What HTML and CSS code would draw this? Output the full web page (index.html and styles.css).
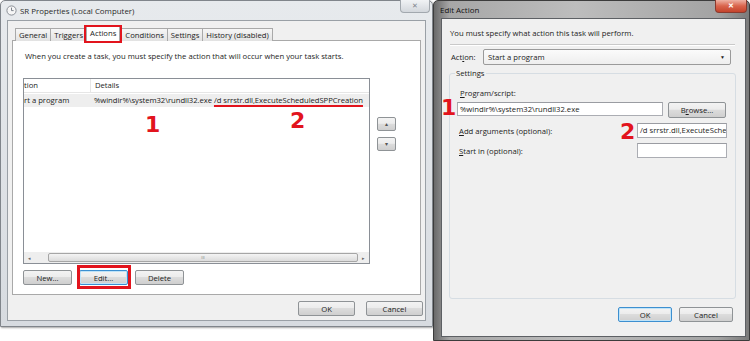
FILE: index.html
```html
<!DOCTYPE html>
<html lang="en">
<head>
  <meta charset="UTF-8">
  <title>SR Properties - Edit Action</title>
  <link rel="stylesheet" href="styles.css">
</head>
<body>
  <div class="win win-props">
    <div class="titlebar">
      <svg class="title-icon" width="11" height="11" viewBox="0 0 11 11">
        <circle cx="5.5" cy="5.5" r="4.6" fill="#f6f6f6" stroke="#8a8f96"/>
        <path d="M5.5 2.6v3h2.1" fill="none" stroke="#707680" stroke-width="0.9"/>
      </svg>
      <span class="title-text">SR Properties (Local Computer)</span>
      <div class="close-btn">&#x2715;</div>
    </div>
    <div class="client">
      <div class="tabs">
        <div class="tab">General</div>
        <div class="tab">Triggers</div>
        <div class="tab active marked-box">Actions</div>
        <div class="tab">Conditions</div>
        <div class="tab">Settings</div>
        <div class="tab">History (disabled)</div>
      </div>
      <div class="pane">
        <p class="intro">When you create a task, you must specify the action that will occur when your task starts.</p>
        <div class="list-row">
          <div class="listview">
            <div class="lv-body">
              <div class="lv-head">
                <div class="col-action">tion</div>
                <div class="col-details">Details</div>
              </div>
              <div class="lv-item">
                <div class="col-action">rt a program</div>
                <div class="col-details">%windir%\system32\rundll32.exe <span class="marked-line">/d srrstr.dll,ExecuteScheduledSPPCreation</span></div>
              </div>
            </div>
            <div class="hscroll">
              <span class="arrow">&#9666;</span>
              <div class="thumb">III</div>
              <span class="arrow">&#9656;</span>
            </div>
          </div>
          <div class="order-btns">
            <button class="btn tiny">&#9652;</button>
            <button class="btn tiny">&#9662;</button>
          </div>
        </div>
        <div class="btn-row">
          <button class="btn">New...</button>
          <button class="btn default marked-btn">Edit...</button>
          <button class="btn">Delete</button>
        </div>
      </div>
      <div class="footer">
        <button class="btn wide">OK</button>
        <button class="btn wide">Cancel</button>
      </div>
    </div>
    <span class="note note-1">1</span>
    <span class="note note-2">2</span>
  </div>

  <div class="win win-edit">
    <div class="titlebar dark">
      <span class="title-text">Edit Action</span>
      <div class="close-btn red">&#x2715;</div>
    </div>
    <div class="client ea-client">
      <p class="ea-intro">You must specify what action this task will perform.</p>
      <div class="sep"></div>
      <div class="action-row">
        <span class="ea-label">Act<u>i</u>on:</span>
        <div class="combo">
          <span>Start a program</span>
          <span class="combo-arrow">&#9660;</span>
        </div>
      </div>
      <fieldset class="group">
        <legend>Settings</legend>
        <div class="field-label"><u>P</u>rogram/script:</div>
        <div class="prog-row">
          <div class="textbox prog">%windir%\system32\rundll32.exe</div>
          <button class="btn browse">B<u>r</u>owse...</button>
        </div>
        <div class="arg-row">
          <span class="field-label inline"><u>A</u>dd arguments (optional):</span>
          <div class="textbox short">/d srrstr.dll,ExecuteSche</div>
        </div>
        <div class="arg-row">
          <span class="field-label inline"><u>S</u>tart in (optional):</span>
          <div class="textbox short"></div>
        </div>
      </fieldset>
      <div class="footer ea-footer">
        <button class="btn default">OK</button>
        <button class="btn">Cancel</button>
      </div>
    </div>
    <span class="note note-3">1</span>
    <span class="note note-4">2</span>
  </div>
</body>
</html>
```

FILE: styles.css
```css
body {
  margin: 0;
  width: 750px;
  height: 341px;
  overflow: hidden;
  background: #fff;
  display: flex;
  align-items: flex-start;
  font-family: "Open Sans", "Noto Sans", sans-serif;
  font-size: 7.7px;
  color: #1c1c1c;
}
p {
  margin: 0;
}
u {
  text-decoration-thickness: 1px;
  text-underline-offset: 1px;
}

.win {
  box-sizing: border-box;
  display: flex;
  flex-direction: column;
  position: relative;
}
.win-props {
  width: 433px;
  height: 327px;
  border: 1px solid #80858b;
  border-radius: 5px 5px 0 0;
  background: linear-gradient(#e7eaed, #d7dbe0);
  padding: 0 6px 5px 6px;
  box-shadow: 1px 1px 2px rgba(0,0,0,0.35);
}
.win-edit {
  width: 317px;
  height: 341px;
  border: 1px solid #3c3c3c;
  border-radius: 5px 5px 0 0;
  background: linear-gradient(90deg, #6a6a6a, #a7a7a7 5%, #bdbdbd 45%, #a3a3a3 90%, #7a7a7a);
  padding: 0 3px 3px 7px;
}

.titlebar {
  height: 19px;
  display: flex;
  align-items: center;
  flex-shrink: 0;
}
.titlebar.dark {
  height: 17px;
}
.title-icon {
  margin-left: -1px;
}
.title-text {
  margin-left: 3px;
  font-size: 7.9px;
  color: #2a2a2a;
}
.dark .title-text {
  margin-left: -1px;
  color: #111;
}
.close-btn {
  margin-left: auto;
  align-self: flex-start;
  width: 30px;
  height: 13px;
  margin-top: -1px;
  margin-right: -4px;
  box-sizing: border-box;
  border: 1px solid #a2a8ae;
  border-top: none;
  border-radius: 0 0 4px 4px;
  background: linear-gradient(#f1f3f5, #d3d7dc);
  color: #7d838a;
  font-size: 7px;
  line-height: 12px;
  text-align: center;
}
.close-btn.red {
  width: 32px;
  margin-right: -1px;
  border-color: #8a3a2e;
  background: linear-gradient(#eeb2a4, #d9644c 50%, #c4432c);
  color: #fff;
  font-weight: bold;
}

.client {
  flex: 1;
  background: #f0f0f0;
  border: 1px solid #9aa0a6;
  display: flex;
  flex-direction: column;
}
.win-props .client {
  padding: 5px 4px 0 4px;
}

/* tabs */
.tabs {
  display: flex;
  align-items: flex-end;
  height: 15px;
  padding-left: 3px;
  margin-bottom: -1px;
  position: relative;
  z-index: 1;
}
.tab {
  height: 12px;
  line-height: 12px;
  padding: 0 3px;
  border: 1px solid #a9a9a9;
  border-bottom: none;
  background: linear-gradient(#f6f6f6, #e2e2e2);
  margin-right: -1px;
}
.tab.active {
  height: 15px;
  line-height: 14px;
  padding: 0 3px;
  margin: 0 1px 0 0;
  background: #fff;
  position: relative;
}
.marked-box::after {
  content: "";
  position: absolute;
  left: -3px;
  right: -3px;
  top: -1px;
  bottom: -2px;
  border: 2px solid #e2141d;
}

.pane {
  height: 255px;
  box-sizing: border-box;
  background: #fff;
  border: 1px solid #a9a9a9;
  padding: 9px 0 0 10px;
}
.intro {
  margin-left: 2px;
  line-height: 12px;
}
.list-row {
  display: flex;
  margin-top: 16px;
}
.listview {
  width: 347px;
  height: 186px;
  box-sizing: border-box;
  border: 1px solid #8a8f96;
  display: flex;
  flex-direction: column;
  overflow: hidden;
}
.lv-body {
  flex: 1;
}
.lv-head,
.lv-item {
  display: flex;
  height: 13px;
  line-height: 13px;
  white-space: nowrap;
}
.lv-head {
  border-bottom: 1px solid #e6e6e6;
}
.lv-item {
  margin-top: 1px;
  background: #eeeeee;
}
.col-action {
  width: 66px;
  flex-shrink: 0;
}
.lv-head .col-action {
  border-right: 1px solid #e6e6e6;
}
.col-details {
  padding-left: 4px;
  letter-spacing: -0.05px;
}
.marked-line {
  text-decoration: underline;
  text-decoration-color: #e2141d;
  text-decoration-thickness: 2px;
  text-underline-offset: 2px;
}
.hscroll {
  height: 11px;
  display: flex;
  align-items: center;
  background: #eeeeee;
  flex-shrink: 0;
}
.arrow {
  width: 11px;
  text-align: center;
  font-size: 5px;
  color: #666;
}
.thumb {
  flex: 1;
  margin-left: 13px;
  height: 9px;
  box-sizing: border-box;
  border: 1px solid #a6a6a6;
  border-radius: 2px;
  background: linear-gradient(#f4f4f4, #dcdcdc);
  font-size: 4px;
  line-height: 7px;
  text-align: center;
  color: #777;
}
.order-btns {
  display: flex;
  flex-direction: column;
  gap: 6px;
  margin: 39px 0 0 7px;
}

/* buttons */
.btn {
  box-sizing: border-box;
  width: 49px;
  height: 15px;
  padding: 0;
  border: 1px solid #8f9396;
  border-radius: 2px;
  background: linear-gradient(#f3f3f3, #ececec 45%, #dcdcdc 50%, #cfcfcf);
  font-family: inherit;
  font-size: 7.7px;
  color: #1c1c1c;
  position: relative;
}
.btn.default {
  border-color: #3c8fd0;
  box-shadow: inset 0 0 0 1px #bfe3f8;
}
.btn.tiny {
  width: 19px;
  height: 14px;
  font-size: 6px;
  color: #555;
}
.btn.wide {
  width: 57px;
}
.btn-row {
  display: flex;
  gap: 7px;
  margin-top: 6px;
}
.marked-btn::after {
  content: "";
  position: absolute;
  left: -3px;
  right: -4px;
  top: -6px;
  bottom: -5px;
  border: 3px solid #e2141d;
}
.footer {
  display: flex;
  justify-content: flex-end;
  gap: 11px;
  margin: 6px -2px 0 0;
}

/* edit action dialog */
.ea-client {
  border-color: #5d6064;
}
.ea-intro {
  margin: 8px 0 0 8px;
  line-height: 12px;
}
.sep {
  margin: 5px 10px 0 8px;
  border-top: 1px solid #c9c9c9;
  border-bottom: 1px solid #fff;
}
.action-row {
  display: flex;
  align-items: center;
  margin-top: 3px;
  height: 16px;
}
.ea-label {
  width: 32px;
  margin-left: 9px;
}
.combo {
  width: 248px;
  height: 16px;
  box-sizing: border-box;
  border: 1px solid #9a9a9a;
  border-radius: 2px;
  background: linear-gradient(#fbfbfb, #eeeeee);
  display: flex;
  align-items: center;
  padding: 0 5px 0 4px;
}
.combo-arrow {
  margin-left: auto;
  font-size: 5px;
  color: #222;
}
.group {
  flex: 1;
  margin: 2px 9px 0 7px;
  padding: 0;
  border: 1px solid #d6dde3;
  border-radius: 3px;
  min-width: 0;
}
.group legend {
  margin-left: 5px;
  padding: 0 1px;
  line-height: 12px;
}
.field-label {
  margin: 8px 0 0 10px;
  line-height: 12px;
}
.field-label.inline {
  margin: 0 0 0 9px;
}
.prog-row {
  display: flex;
  align-items: flex-start;
  gap: 5px;
  margin: 3px 0 0 7px;
}
.textbox {
  box-sizing: border-box;
  height: 14px;
  border: 1px solid #abadb3;
  border-top-color: #9a9ca2;
  background: #fff;
  line-height: 12px;
  padding-left: 2px;
  white-space: nowrap;
  overflow: hidden;
}
.textbox.prog {
  width: 206px;
}
.btn.browse {
  width: 58px;
  height: 16px;
}
.arg-row {
  display: flex;
  align-items: center;
  margin-top: 5px;
  height: 15px;
}
.textbox.short {
  width: 90px;
  height: 15px;
  margin-left: auto;
  margin-right: 8px;
}
.ea-footer {
  gap: 7px;
  margin: 8px 0 14px;
  padding-right: 12px;
}
.ea-footer .btn {
  width: 54px;
}

/* red annotations drawn over the screenshot */
.note {
  position: absolute;
  font-family: "DejaVu Sans", sans-serif;
  font-weight: bold;
  font-size: 22px;
  line-height: 22px;
  color: #e2141d;
}
.note-1 { left: 144px; top: 113px; }
.note-2 { left: 289px; top: 109px; }
.note-3 { left: 7px; top: 96px; }
.note-4 { left: 186px; top: 120px; }
```
